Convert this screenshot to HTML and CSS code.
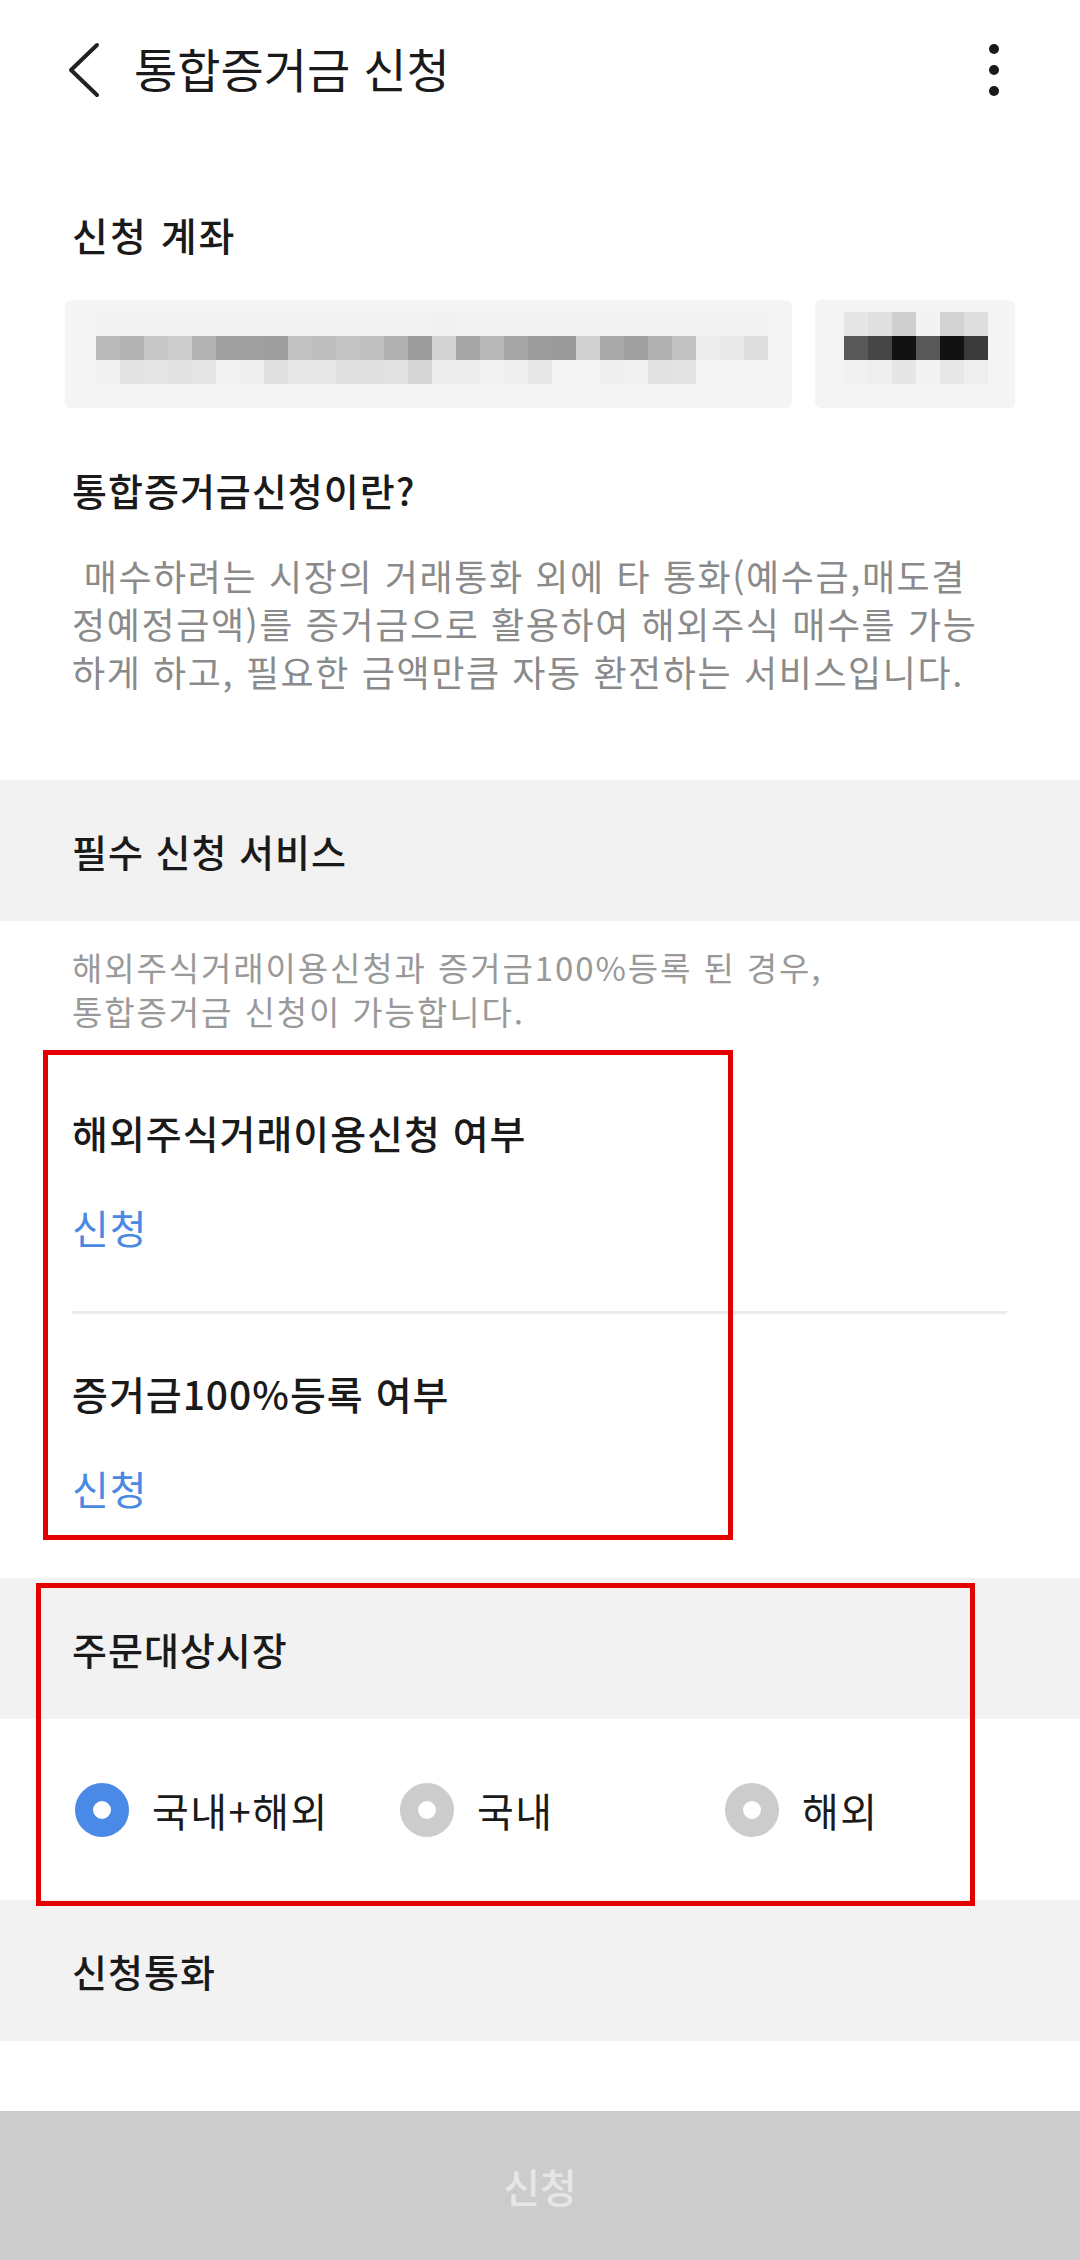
FILE: index.html
```html
<!DOCTYPE html>
<html lang="ko">
<head>
    <meta charset="UTF-8">
    <meta name="viewport" content="width=device-width, initial-scale=1.0">
    <title>통합증거금 신청</title>
    <link rel="stylesheet" href="styles.css">
</head>
<body>
    <div class="page">
        <header class="app-bar">
            <button class="back-btn" aria-label="뒤로">
                <svg width="40" height="60" viewBox="0 0 40 60">
                    <path d="M33 5 L7 30 L33 55" fill="none" stroke="#222" stroke-width="4" stroke-linecap="round" stroke-linejoin="round"/>
                </svg>
            </button>
            <h1 class="app-title">통합증거금 신청</h1>
            <button class="more-btn" aria-label="더보기">
                <span></span><span></span><span></span>
            </button>
        </header>

        <section class="account">
            <h2 class="section-title">신청 계좌</h2>
            <div class="account-row">
                <div class="account-box account-no">
                    <div class="mosaic" id="mosaicNo"></div>
                </div>
                <div class="account-box account-name">
                    <div class="mosaic" id="mosaicName"></div>
                </div>
            </div>
        </section>

        <section class="intro">
            <h2 class="section-title">통합증거금신청이란?</h2>
            <p class="intro-text">&nbsp;매수하려는 시장의 거래통화 외에 타 통화(예수금,매도결<br>정예정금액)를 증거금으로 활용하여 해외주식 매수를 가능<br>하게 하고, 필요한 금액만큼 자동 환전하는 서비스입니다.</p>
        </section>

        <div class="band">
            <h2 class="section-title">필수 신청 서비스</h2>
        </div>
        <p class="note">해외주식거래이용신청과 증거금100%등록 된 경우,<br>통합증거금 신청이 가능합니다.</p>

        <div class="req-list">
            <div class="req-item">
                <div class="req-title">해외주식거래이용신청 여부</div>
                <a class="req-link">신청</a>
            </div>
            <div class="req-item">
                <div class="req-title">증거금100%등록 여부</div>
                <a class="req-link">신청</a>
            </div>
        </div>

        <div class="band">
            <h2 class="section-title">주문대상시장</h2>
        </div>
        <div class="market-options">
            <label class="radio checked"><span class="radio-dot"></span>국내+해외</label>
            <label class="radio"><span class="radio-dot"></span>국내</label>
            <label class="radio"><span class="radio-dot"></span>해외</label>
        </div>

        <div class="band">
            <h2 class="section-title">신청통화</h2>
        </div>
        <div class="spacer"></div>

        <button class="submit-btn" disabled>신청</button>

        <!-- 캡처 표시용 빨간 박스 -->
        <div class="mark mark-required"></div>
        <div class="mark mark-market"></div>
    </div>

    <script>
        // 계좌번호 / 이름 모자이크
        const mosaicNo = [
            'f3,f3,f3,f3,f3,f3,f3,f3,f3,f3,f3,f2,f2,f2,f1,f3,f3,f3,f3,f3,f3,f3,f3,f3,f3,f3,f3,f3',
            'bb,b3,c8,cd,b3,a0,a0,9e,c2,bd,c4,bf,b0,9c,d2,a5,b8,a5,9c,9a,d0,aa,a0,b0,c2,ec,e9,dd',
            'f0,e4,e6,e2,e6,f2,ef,e0,e8,e8,e0,e0,e2,d6,ec,ec,f3,ee,e8,f4,f4,ee,f0,e2,e4,f4,f4,f4'
        ];
        const mosaicName = [
            'e6,e0,cf,f3,d2,de',
            '58,45,12,58,12,3b',
            'f0,ee,e6,f3,e8,ee'
        ];

        function buildMosaic(id, rows) {
            const box = document.getElementById(id);
            rows.forEach(function(row) {
                const line = document.createElement('div');
                line.className = 'mosaic-row';
                row.split(',').forEach(function(v) {
                    const cell = document.createElement('span');
                    cell.style.background = '#' + v + v + v;
                    line.appendChild(cell);
                });
                box.appendChild(line);
            });
        }

        buildMosaic('mosaicNo', mosaicNo);
        buildMosaic('mosaicName', mosaicName);
    </script>
</body>
</html>
```

FILE: styles.css
```css
* {
    box-sizing: border-box;
}
body {
    margin: 0;
    background: #fff;
    font-family: "Noto Sans CJK KR", "Noto Sans", sans-serif;
    color: #1a1a1a;
}
button {
    font-family: inherit;
    border: none;
    background: none;
    padding: 0;
}
.page {
    position: relative;
    width: 1080px;
    height: 2260px;
    overflow: hidden;
}

/* 상단 바 */
.app-bar {
    height: 140px;
    display: flex;
    align-items: center;
    padding: 0 66px 4px 64px;
}
.back-btn {
    width: 40px;
    height: 60px;
    margin-right: 30px;
    margin-top: 4px;
}
.back-btn svg {
    display: block;
}
.app-title {
    margin: 0;
    font-size: 47px;
    font-weight: 400;
    line-height: 60px;
    color: #1a1a1a;
}
.more-btn {
    margin-left: auto;
    margin-top: 4px;
    width: 40px;
    height: 60px;
    display: flex;
    flex-direction: column;
    align-items: center;
    justify-content: center;
    gap: 11px;
}
.more-btn span {
    width: 10px;
    height: 10px;
    border-radius: 50%;
    background: #1a1a1a;
}

.section-title {
    margin: 0;
    font-size: 38px;
    font-weight: 500;
    line-height: 50px;
    letter-spacing: 1px;
    color: #1a1a1a;
}

/* 신청 계좌 */
.account {
    padding-top: 69px;
}
.account .section-title {
    padding-left: 72px;
    font-size: 39px;
    letter-spacing: 2px;
}
.account-row {
    display: flex;
    gap: 23px;
    margin-top: 41px;
    padding-left: 65px;
}
.account-box {
    height: 108px;
    background: #f4f4f4;
    border-radius: 6px;
    padding-top: 12px;
}
.account-no {
    width: 727px;
    padding-left: 31px;
}
.account-name {
    width: 200px;
    padding-left: 29px;
}
.mosaic-row {
    display: flex;
    height: 24px;
}
.mosaic-row span {
    width: 24px;
    height: 24px;
}

/* 안내 */
.intro {
    padding: 57px 60px 85px 72px;
}
.intro-text {
    margin: 36px 0 0;
    font-size: 36px;
    line-height: 48px;
    letter-spacing: 1.6px;
    color: #8a8a8a;
    white-space: nowrap;
}

.band {
    height: 141px;
    background: #f2f2f2;
    display: flex;
    align-items: center;
    padding-left: 72px;
}

.note {
    margin: 0;
    padding: 24px 72px 20px;
    font-size: 33px;
    line-height: 44px;
    letter-spacing: 1.9px;
    color: #999;
    white-space: nowrap;
}

/* 필수 신청 항목 */
.req-list {
    padding: 0 73px 6px 72px;
}
.req-item {
    padding: 54px 0 59px;
}
.req-item + .req-item {
    border-top: 3px solid #ececec;
}
.req-title {
    font-size: 39px;
    font-weight: 500;
    line-height: 50px;
    letter-spacing: 1px;
}
.req-link {
    display: block;
    margin-top: 45px;
    font-size: 40px;
    line-height: 50px;
    letter-spacing: 1px;
    color: #4a89e2;
}

/* 주문대상시장 */
.market-options {
    height: 181px;
    display: grid;
    grid-template-columns: repeat(3, 325px);
    align-items: center;
    padding-left: 75px;
}
.radio {
    display: flex;
    align-items: center;
    gap: 23px;
    font-size: 40px;
    line-height: 50px;
    letter-spacing: 1.5px;
    color: #1a1a1a;
}
.radio-dot {
    width: 54px;
    height: 54px;
    border-radius: 50%;
    border: 18px solid #cccccc;
    background: #fff;
}
.radio.checked .radio-dot {
    border-color: #4a89e5;
}

.spacer {
    height: 70px;
}

.submit-btn {
    display: block;
    width: 100%;
    height: 149px;
    background: #cccccc;
    color: #e6e6e6;
    font-size: 40px;
    font-weight: 500;
}

/* 빨간 표시 박스 */
.mark {
    position: absolute;
    border: 5px solid #e50000;
}
.mark-required {
    left: 43px;
    top: 1050px;
    width: 690px;
    height: 490px;
}
.mark-market {
    left: 36px;
    top: 1583px;
    width: 939px;
    height: 323px;
}
```
